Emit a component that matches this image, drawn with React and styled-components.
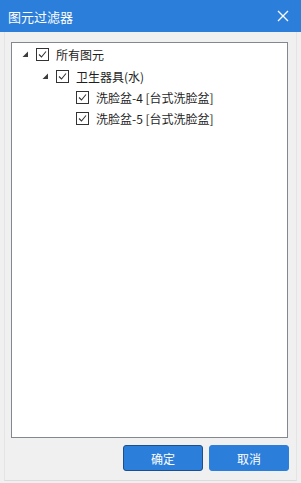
import React from "react";
import styled, { createGlobalStyle } from "styled-components";

const GlobalStyle = createGlobalStyle`
  html, body {
    margin: 0;
    padding: 0;
    background: #f0f0f0;
  }
  body {
    font-family: "Microsoft YaHei", "Noto Sans CJK SC", "Noto Sans", sans-serif;
  }
`;

const Window = styled.div`
  width: 301px;
  height: 483px;
  display: flex;
  flex-direction: column;
  background: #f0f0f0;
  overflow: hidden;
`;

const TitleBar = styled.div`
  height: 32px;
  flex: none;
  display: flex;
  align-items: center;
  justify-content: space-between;
  padding: 0 8px 0 8px;
  background: #2b7ed9;
  color: #ffffff;
  font-size: 13px;
`;

const Title = styled.span`
  letter-spacing: 0;
`;

const CloseButton = styled.div`
  width: 20px;
  height: 20px;
  display: flex;
  align-items: center;
  justify-content: center;
`;

const Body = styled.div`
  flex: 1;
  display: flex;
  flex-direction: column;
  margin: 0 4px 2px 4px;
  border-left: 1px solid #e4e4e4;
  border-right: 1px solid #e4e4e4;
  border-bottom: 1px solid #dcdcdc;
  padding: 10px 8px 9px 6px;
  gap: 7px;
`;

const TreeBox = styled.div`
  flex: 1;
  background: #ffffff;
  border: 1px solid #828790;
  padding: 1px 0 0 0;
`;

const Row = styled.div`
  height: 21.4px;
  display: flex;
  align-items: center;
  padding-left: ${({ level }) => 10 + level * 20}px;
  font-size: 12px;
  color: #1e1e1e;
  white-space: nowrap;
`;

const Toggle = styled.div`
  width: 14px;
  height: 12px;
  display: flex;
  align-items: center;
  justify-content: flex-start;
  visibility: ${({ hidden }) => (hidden ? "hidden" : "visible")};
`;

const Box = styled.div`
  width: 11px;
  height: 11px;
  border: 1px solid #333333;
  background: #ffffff;
  display: flex;
  align-items: center;
  justify-content: center;
  margin-right: 7px;
`;

const Footer = styled.div`
  display: flex;
  justify-content: flex-end;
  gap: 6px;
  margin-right: -1px;
`;

const Button = styled.div`
  width: 80px;
  height: 26px;
  box-sizing: border-box;
  border-radius: 3px;
  background: #2b7ed9;
  border: 1px solid ${({ focused }) => (focused ? "#1d4f8e" : "#2b7ed9")};
  color: #ffffff;
  font-size: 12px;
  display: flex;
  align-items: center;
  justify-content: center;
`;

const Arrow = () => (
  <svg width="7" height="7" viewBox="0 0 7 7">
    <polygon points="6,0.5 6,6 0.5,6" fill="#3c3c3c" />
  </svg>
);

const Check = () => (
  <svg width="9" height="9" viewBox="0 0 9 9">
    <polyline
      points="1,4.5 3.5,7 8,1.5"
      fill="none"
      stroke="#333333"
      strokeWidth="1.1"
    />
  </svg>
);

const items = [
  { level: 0, label: "所有图元", expand: true },
  { level: 1, label: "卫生器具(水)", expand: true },
  { level: 2, label: "洗脸盆-4 [台式洗脸盆]" },
  { level: 2, label: "洗脸盆-5 [台式洗脸盆]" },
];

export default function App() {
  return (
    <>
      <GlobalStyle />
      <Window>
        <TitleBar>
          <Title>图元过滤器</Title>
          <CloseButton>
            <svg width="12" height="12" viewBox="0 0 12 12">
              <path d="M1 1 L11 11 M11 1 L1 11" stroke="#ffffff" strokeWidth="1.3" />
            </svg>
          </CloseButton>
        </TitleBar>
        <Body>
          <TreeBox>
            {items.map((it) => (
              <Row key={it.label} level={it.level}>
                <Toggle hidden={!it.expand}>
                  <Arrow />
                </Toggle>
                <Box>
                  <Check />
                </Box>
                <span>{it.label}</span>
              </Row>
            ))}
          </TreeBox>
          <Footer>
            <Button focused>确定</Button>
            <Button>取消</Button>
          </Footer>
        </Body>
      </Window>
    </>
  );
}
